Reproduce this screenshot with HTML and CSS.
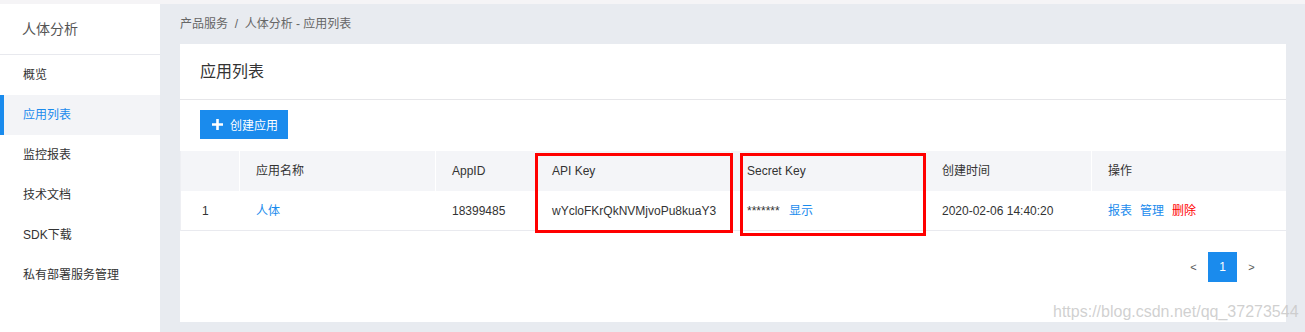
FILE: index.html
```html
<!DOCTYPE html>
<html lang="zh-CN">
<head>
<meta charset="utf-8">
<title>应用列表</title>
<link rel="stylesheet" href="styles.css">
</head>
<body>
<div class="topstrip"></div>
<div class="layout">
  <aside class="sidebar">
    <div class="side-title">人体分析</div>
    <nav class="menu">
      <a class="menu-item">概览</a>
      <a class="menu-item active">应用列表</a>
      <a class="menu-item">监控报表</a>
      <a class="menu-item">技术文档</a>
      <a class="menu-item">SDK下载</a>
      <a class="menu-item">私有部署服务管理</a>
    </nav>
  </aside>
  <main class="main">
    <div class="breadcrumb">产品服务 &nbsp;/&nbsp; 人体分析 - 应用列表</div>
    <section class="card">
      <div class="card-head">应用列表</div>
      <div class="toolbar">
        <button class="btn-primary"><svg class="plus" width="11" height="11" viewBox="0 0 11 11"><path d="M5.5 0v11M0 5.5h11" stroke="#fff" stroke-width="2.6"/></svg><span>创建应用</span></button>
      </div>
      <div class="table-wrap">
        <div class="trow thead">
          <div class="c c1"></div>
          <div class="c c2">应用名称</div>
          <div class="c c3">AppID</div>
          <div class="c c4">API Key</div>
          <div class="c c5">Secret Key</div>
          <div class="c c6">创建时间</div>
          <div class="c c7">操作</div>
        </div>
        <div class="trow tbody">
          <div class="c c1 idx">1</div>
          <div class="c c2"><a class="link">人体</a></div>
          <div class="c c3">18399485</div>
          <div class="c c4">wYcloFKrQkNVMjvoPu8kuaY3</div>
          <div class="c c5">******* <a class="link show">显示</a></div>
          <div class="c c6">2020-02-06 14:40:20</div>
          <div class="c c7"><a class="link">报表</a><a class="link">管理</a><a class="link danger">删除</a></div>
        </div>
        <div class="mark mark-api"></div>
        <div class="mark mark-secret"></div>
      </div>
      <div class="pager">
        <span class="pg">&lt;</span>
        <span class="pg current">1</span>
        <span class="pg">&gt;</span>
      </div>
    </section>
  </main>
</div>
<div class="watermark">https://blog.csdn.net/qq_37273544</div>
</body>
</html>
```

FILE: styles.css
```css
* { box-sizing: border-box; }
html, body { margin: 0; padding: 0; }
body {
  width: 1305px;
  height: 332px;
  overflow: hidden;
  background: #e8ebf0;
  font-family: "Liberation Sans", "Noto Sans CJK SC", sans-serif;
  font-size: 12px;
  color: #333;
  position: relative;
}
.topstrip { height: 4px; background: #f5f4f6; }
.layout { display: flex; height: 328px; }

.sidebar { width: 160px; background: #fff; flex: none; }
.side-title {
  height: 51px;
  line-height: 50px;
  padding-left: 22px;
  font-size: 14px;
  color: #555;
  border-bottom: 1px solid #e8e9ee;
}
.menu { display: flex; flex-direction: column; }
.menu-item {
  height: 40px;
  line-height: 40px;
  padding-left: 23px;
  color: #333;
  font-size: 12px;
}
.menu-item.active {
  background: #f3f4f7;
  color: #1a8bed;
  border-left: 4px solid #1a8bed;
  padding-left: 19px;
}

.main { flex: 1; padding: 0 19px 10px 20px; display: flex; flex-direction: column; }
.breadcrumb { height: 40px; line-height: 40px; color: #666; font-size: 12px; }
.card { background: #fff; flex: 1; }
.card-head {
  height: 56px;
  line-height: 55px;
  padding-left: 20px;
  font-size: 16px;
  color: #333;
  border-bottom: 1px solid #e6e6e9;
}
.toolbar { padding: 10px 20px 0; height: 51px; }
.btn-primary {
  width: 88px;
  height: 29px;
  border: 0;
  background: #1a8bed;
  color: #fff;
  font-family: inherit;
  font-size: 12px;
  display: flex;
  align-items: center;
  padding: 0 0 0 12px;
  gap: 7px;
}
.plus { display: block; }

.table-wrap { position: relative; }
.trow { display: flex; height: 40px; }
.thead { background: #f4f5f8; border-left: 1px solid #eeeff3; }
.tbody { border-bottom: 1px solid #e9eaef; border-left: 1px solid #eeeff3; }
.c { line-height: 40px; padding-left: 16px; white-space: nowrap; }
.thead .c + .c { border-left: 1px solid #fff; }
.tbody .c + .c { border-left: 1px solid transparent; }
.c1 { width: 58px; }
.c2 { width: 196px; }
.c3 { width: 100px; }
.c4 { width: 195px; }
.c5 { width: 195px; }
.c6 { width: 166px; }
.c7 { flex: 1; }
.idx { padding-left: 21px; }
.link { color: #1a8bed; margin-right: 8px; }
.link.show { margin-left: 6px; }
.link.danger { color: #f00; }

.mark { position: absolute; border: 3px solid #f00; }
.mark-api { left: 355px; top: 2px; width: 198px; height: 80px; }
.mark-secret { left: 560px; top: 2px; width: 186px; height: 83px; }

.pager {
  display: flex;
  justify-content: flex-end;
  padding: 21px 20px 0 0;
}
.pg {
  width: 29px;
  height: 30px;
  line-height: 30px;
  text-align: center;
  font-size: 11px;
  color: #555;
}
.pg.current { background: #1a8bed; color: #fff; font-size: 12px; }

.watermark {
  position: absolute;
  left: 1053px;
  top: 303px;
  font-family: "Liberation Sans", sans-serif;
  font-size: 16px;
  color: rgba(200, 200, 200, 0.85);
  white-space: nowrap;
}
```
